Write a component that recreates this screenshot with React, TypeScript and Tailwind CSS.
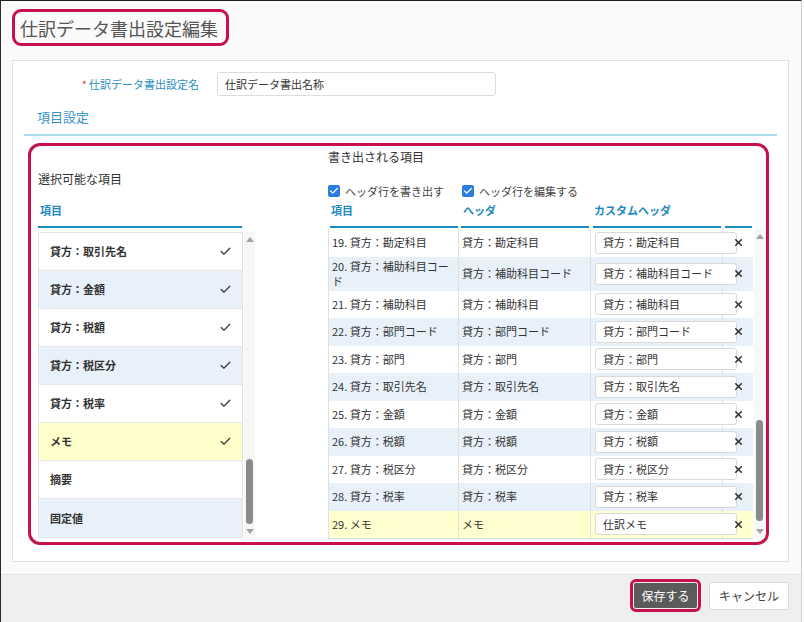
import { Check, X } from "lucide-react";

const AVAILABLE = [
  { label: "貸方：取引先名", checked: true },
  { label: "貸方：金額", checked: true },
  { label: "貸方：税額", checked: true },
  { label: "貸方：税区分", checked: true },
  { label: "貸方：税率", checked: true },
  { label: "メモ", checked: true, memo: true },
  { label: "摘要", checked: false },
  { label: "固定値", checked: false },
];

const ROWS = [
  { no: 19, item: "貸方：勘定科目", header: "貸方：勘定科目", custom: "貸方：勘定科目" },
  { no: 20, item: "貸方：補助科目コード", header: "貸方：補助科目コード", custom: "貸方：補助科目コード", tall: true },
  { no: 21, item: "貸方：補助科目", header: "貸方：補助科目", custom: "貸方：補助科目" },
  { no: 22, item: "貸方：部門コード", header: "貸方：部門コード", custom: "貸方：部門コード" },
  { no: 23, item: "貸方：部門", header: "貸方：部門", custom: "貸方：部門" },
  { no: 24, item: "貸方：取引先名", header: "貸方：取引先名", custom: "貸方：取引先名" },
  { no: 25, item: "貸方：金額", header: "貸方：金額", custom: "貸方：金額" },
  { no: 26, item: "貸方：税額", header: "貸方：税額", custom: "貸方：税額" },
  { no: 27, item: "貸方：税区分", header: "貸方：税区分", custom: "貸方：税区分" },
  { no: 28, item: "貸方：税率", header: "貸方：税率", custom: "貸方：税率" },
  { no: 29, item: "メモ", header: "メモ", custom: "仕訳メモ", memo: true },
];

function Scrollbar({ thumbTop, thumbHeight }: { thumbTop: number; thumbHeight: number }) {
  return (
    <div className="relative h-full w-[11px] bg-[#f7f7f7]">
      <span className="absolute left-[2px] top-[5px] h-0 w-0 border-x-[4px] border-b-[5px] border-x-transparent border-b-[#a3a3a3]" />
      <span
        className="absolute left-[2px] w-[7px] rounded-full bg-[#8a8a8a]"
        style={{ top: thumbTop, height: thumbHeight }}
      />
      <span className="absolute bottom-[4px] left-[2px] h-0 w-0 border-x-[4px] border-t-[5px] border-x-transparent border-t-[#a3a3a3]" />
    </div>
  );
}

function Checkbox({ label }: { label: string }) {
  return (
    <span className="flex items-center gap-[5px]">
      <span className="flex h-[12px] w-[12px] items-center justify-center rounded-[2px] bg-[#2a7de1]">
        <Check size={10} strokeWidth={3} className="text-white" />
      </span>
      <span className="text-[11px] text-[#444]">{label}</span>
    </span>
  );
}

export default function App() {
  return (
    <div className="h-[622px] w-[804px] overflow-hidden bg-white font-['Noto_Sans_CJK_JP','Noto_Sans',sans-serif]">
      <div className="flex h-full w-[802px] flex-col border-l border-r border-t border-l-[#2a2a2a] border-r-[#cfcfcf] border-t-[#1e1e1e] bg-[#fafafa]">
        {/* title */}
        <div className="ml-[11px] mt-[8px] flex h-[37px] w-[217px] items-center rounded-[9px] border-[3px] border-[#c8104a] pl-[5px] text-[18px] leading-none text-[#555]">
          仕訳データ書出設定編集
        </div>

        {/* panel */}
        <div className="ml-[11px] mt-[14px] h-[502px] w-[777px] shrink-0 border border-[#e2e2e2] bg-white">
          <div className="mt-[11px] flex h-[24px] items-center">
            <label className="w-[186px] text-right text-[11px] text-[#2b8fc4]">
              <span className="mr-[2px] text-[#e0463c]">*</span>
              仕訳データ書出設定名
            </label>
            <div className="ml-[18px] flex h-[24px] w-[279px] items-center rounded-[3px] border border-[#dcdcdc] pl-[7px] text-[11px] text-[#333]">
              仕訳データ書出名称
            </div>
          </div>

          <div className="mx-[11px] mt-[12px] flex h-[28px] items-center border-b-2 border-[#a9dbec] pb-[8px] pl-[13px] text-[13px] text-[#3b93c7]">
            項目設定
          </div>

          {/* highlighted settings */}
          <div className="ml-[15px] mt-[7px] flex h-[402px] w-[741px] rounded-[12px] border-[3px] border-[#c8104a]">
            {/* available list */}
            <div className="ml-[7px] flex w-[217px] flex-col">
              <div className="mt-[22px] h-[22px] text-[12px] leading-[22px] text-[#333]">選択可能な項目</div>
              <div className="flex h-[36px] items-end pb-[8px] pl-[2px] text-[11px] font-bold leading-[15px] text-[#1e88c0]">
                項目
              </div>
              <div className="h-[2px] w-[204px] bg-[#1a8bbf]" />
              <div className="mt-[4px] flex h-[306px]">
                <div className="w-[206px] border border-[#e3e3e3]">
                  {AVAILABLE.map((a, i) => (
                    <div
                      key={a.label}
                      className={
                        "flex h-[38px] items-center justify-between border-b border-[#e6e6e6] pl-[11px] pr-[10px] text-[11px] font-bold text-[#333] last:border-b-0 " +
                        (a.memo ? "bg-[#ffffcc]" : i % 2 === 1 ? "bg-[#e8f0fa]" : "bg-white")
                      }
                    >
                      <span>{a.label}</span>
                      {a.checked && <Check size={13} strokeWidth={2.2} className="text-[#3a3a3a]" />}
                    </div>
                  ))}
                </div>
                <div className="ml-[1px]">
                  <Scrollbar thumbTop={227} thumbHeight={65} />
                </div>
              </div>
            </div>

            {/* exported items */}
            <div className="ml-[73px] flex w-[437px] flex-col">
              <div className="h-[21px] text-[12px] leading-[21px] text-[#333]">書き出される項目</div>
              <div className="mt-[14px] flex h-[20px] items-center">
                <Checkbox label="ヘッダ行を書き出す" />
                <span className="ml-[18px]">
                  <Checkbox label="ヘッダ行を編集する" />
                </span>
              </div>
              <div className="flex h-[25px] items-end pb-[8px] text-[11px] font-bold leading-[15px] text-[#1e88c0]">
                <span className="w-[131px] pl-[3px]">項目</span>
                <span className="w-[132px] pl-[4px]">ヘッダ</span>
                <span className="w-[132px] pl-[3px]">カスタムヘッダ</span>
              </div>
              <div className="flex h-[2px]">
                <span className="ml-[2px] w-[128px] bg-[#1a8bbf]" />
                <span className="ml-[3px] w-[128px] bg-[#1a8bbf]" />
                <span className="ml-[4px] w-[128px] bg-[#1a8bbf]" />
                <span className="ml-[4px] w-[27px] bg-[#1a8bbf]" />
              </div>
              <div className="mt-[1px] flex">
                <div className="w-[425px] border-b border-l border-[#e0e0e0]">
                  {ROWS.map((r, i) => (
                    <div
                      key={r.no}
                      className={
                        "flex text-[11px] leading-[15px] text-[#333] " +
                        (r.tall ? "h-[34px] " : "h-[27.5px] ") +
                        (r.memo ? "bg-[#ffffd0]" : i % 2 === 1 ? "bg-[#e8f0fa]" : "bg-white")
                      }
                    >
                      <div className="flex w-[130px] items-center border-r border-[#e0e0e0] pl-[3px]">
                        {r.tall ? (
                          <span>
                            {r.no}. 貸方：補助科目コー
                            <br />ド
                          </span>
                        ) : (
                          <span>
                            {r.no}. {r.item}
                          </span>
                        )}
                      </div>
                      <div className="flex w-[132px] items-center border-r border-[#e0e0e0] pl-[3px]">{r.header}</div>
                      <div className="flex w-[132px] items-center border-r border-[#e0e0e0]">
                        <div className="ml-[4px] flex h-[22px] w-[142px] shrink-0 items-center rounded-[3px] border border-[#d9d9d9] bg-white pl-[7px]">
                          {r.custom}
                        </div>
                      </div>
                      <div className="flex w-[30px] items-center justify-center">
                        <X size={11} strokeWidth={3.4} className="text-[#333]" />
                      </div>
                    </div>
                  ))}
                </div>
                <div className="ml-[1px] h-[309px]">
                  <Scrollbar thumbTop={191} thumbHeight={101} />
                </div>
              </div>
            </div>
          </div>
        </div>

        {/* footer */}
        <div className="mt-[12px] flex flex-1 items-center justify-end border-t border-[#e4e4e4] bg-[#efefef] pb-[6px] pr-[12px]">
          <div className="rounded-[6px] border-[3px] border-[#c8104a] p-[1px]">
            <button className="flex h-[25px] w-[63px] items-center justify-center rounded-[2px] bg-[#5b5b5b] text-[12px] text-white">
              保存する
            </button>
          </div>
          <button className="ml-[8px] flex h-[28px] w-[80px] items-center justify-center rounded-[3px] border border-[#dadada] bg-white text-[12px] text-[#444]">
            キャンセル
          </button>
        </div>
      </div>
    </div>
  );
}
